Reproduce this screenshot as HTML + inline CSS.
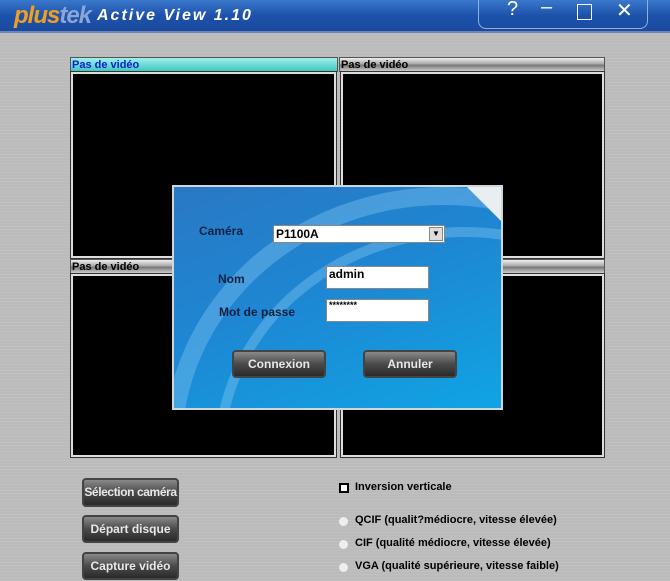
<!DOCTYPE html>
<html><head><meta charset="utf-8"><style>
*{margin:0;padding:0;box-sizing:border-box}
html{overflow:hidden;width:670px;height:581px}
body{width:670px;height:581px;overflow:hidden;position:relative;font-family:"Liberation Sans Narrow","Liberation Sans",sans-serif;background:repeating-linear-gradient(180deg,#b8b8b8 0,#c2c2c2 2px,#b4b4b4 3px);}
.abs{position:absolute;white-space:nowrap}
.title{left:0;top:0;width:670px;height:33px;background:linear-gradient(180deg,#3a78cc 0,#1d52ab 50%,#1a4a9f 100%);border-bottom:2px solid #6d86b5}
.logo{left:14px;top:2px;font:italic bold 24px "Liberation Sans",sans-serif;color:#f0a020;letter-spacing:-1px}
.logo span{color:#8aa6d6}
.tt{left:97px;top:7px;font:italic bold 16px "Liberation Sans",sans-serif;color:#fff;letter-spacing:2px}
.ctl{left:478px;top:-2px;width:170px;height:31px;border:1px solid #8fb0e0;border-top:none;border-radius:0 0 8px 8px;color:#fff;font-size:20px}
.ctl span{position:absolute;top:0}
.hdr{height:15px;background:linear-gradient(180deg,#eee 0,#aaa 45%,#777 55%,#ccc 100%);font:bold 11px "Liberation Sans Narrow","Liberation Sans",sans-serif;color:#000;padding-left:1px;line-height:14px;border:1px solid #555}
.hdr.act{background:linear-gradient(180deg,#9ff0ea,#40c8c0);color:#1020d0}
.vid{background:#000;border:2px solid #ddd;outline:1px solid #333}
.dlg{left:172px;top:185px;width:331px;height:225px;border:2px solid #cfd6dc;overflow:hidden;background:linear-gradient(160deg,#2a78c4 0,#1e86d2 45%,#10a4e4 100%)}
.arc{border-radius:50%;border-style:solid}
.lbl{font:bold 12px "Liberation Sans Narrow","Liberation Sans",sans-serif;color:#102040}
.inp{background:#fff;border:1px solid #888;font:bold 12px "Liberation Sans Narrow","Liberation Sans",sans-serif;padding-left:2px}
.btn{background:linear-gradient(180deg,#8a8a8a 0,#4a4a4a 50%,#2a2a2a 100%);border:2px solid #444;border-radius:4px;color:#e8e8e8;font:bold 12px "Liberation Sans Narrow","Liberation Sans",sans-serif;text-align:center}
.opt{font:bold 11px "Liberation Sans Narrow","Liberation Sans",sans-serif;color:#000}
.rad{width:9px;height:9px;border-radius:50%;background:#eee}
</style></head><body>
<div class="abs title"></div>
<div class="abs logo">plus<span>tek</span></div>
<div class="abs tt">Active View 1.10</div>
<div class="abs ctl"><span style="left:28px">?</span><span style="left:62px;top:-2px">–</span><span style="left:98px;top:6px;width:15px;height:16px;border:1.5px solid #fff"></span><span style="left:137px">✕</span></div>

<div class="abs hdr act" style="left:70px;top:57px;width:268px">Pas de vidéo</div>
<div class="abs hdr" style="left:339px;top:57px;width:266px">Pas de vidéo</div>
<div class="abs vid" style="left:71px;top:72px;width:265px;height:186px"></div>
<div class="abs vid" style="left:341px;top:72px;width:263px;height:186px"></div>
<div class="abs hdr" style="left:70px;top:259px;width:268px">Pas de vidéo</div>
<div class="abs hdr" style="left:339px;top:259px;width:266px"></div>
<div class="abs vid" style="left:71px;top:274px;width:265px;height:183px"></div>
<div class="abs vid" style="left:341px;top:274px;width:263px;height:183px"></div>

<div class="abs dlg">
 <div class="abs arc" style="left:-10px;top:0px;width:560px;height:520px;border-width:18px;border-color:rgba(120,190,240,.45);"></div>
 <div class="abs arc" style="left:40px;top:40px;width:500px;height:460px;border-width:10px;border-color:rgba(150,210,245,.35);"></div>
 <div class="abs" style="right:-2px;top:-2px;width:0;height:0;border-top:38px solid #e8eef2;border-left:38px solid transparent"></div>
 <div class="abs lbl" style="left:25px;top:37px">Caméra</div>
 <div class="abs inp" style="left:99px;top:38px;width:172px;height:18px;line-height:16px">P1100A<span style="position:absolute;right:1px;top:1px;width:14px;height:14px;background:#ddd;border:1px solid #888;font-size:8px;text-align:center;line-height:12px">▼</span></div>
 <div class="abs lbl" style="left:44px;top:85px">Nom</div>
 <div class="abs inp" style="left:152px;top:79px;width:103px;height:23px">admin</div>
 <div class="abs lbl" style="left:45px;top:118px">Mot de passe</div>
 <div class="abs inp" style="left:152px;top:112px;width:103px;height:23px;font-size:9px">********</div>
 <div class="abs btn" style="left:58px;top:163px;width:94px;height:28px;line-height:24px">Connexion</div>
 <div class="abs btn" style="left:189px;top:163px;width:94px;height:28px;line-height:24px">Annuler</div>
</div>

<div class="abs btn" style="left:82px;top:478px;width:97px;height:29px;line-height:25px;letter-spacing:-0.4px">Sélection caméra</div>
<div class="abs btn" style="left:82px;top:515px;width:97px;height:28px;line-height:24px">Départ disque</div>
<div class="abs btn" style="left:82px;top:552px;width:97px;height:28px;line-height:24px">Capture vidéo</div>

<div class="abs" style="left:339px;top:483px;width:10px;height:10px;border:2px solid #000;background:#fff"></div>
<div class="abs opt" style="left:355px;top:481px">Inversion verticale</div>
<div class="abs rad" style="left:339px;top:517px"></div>
<div class="abs opt" style="left:355px;top:514px">QCIF (qualit?médiocre, vitesse élevée)</div>
<div class="abs rad" style="left:339px;top:540px"></div>
<div class="abs opt" style="left:355px;top:537px">CIF (qualité médiocre, vitesse élevée)</div>
<div class="abs rad" style="left:339px;top:563px"></div>
<div class="abs opt" style="left:355px;top:560px">VGA (qualité supérieure, vitesse faible)</div>
</body></html>
